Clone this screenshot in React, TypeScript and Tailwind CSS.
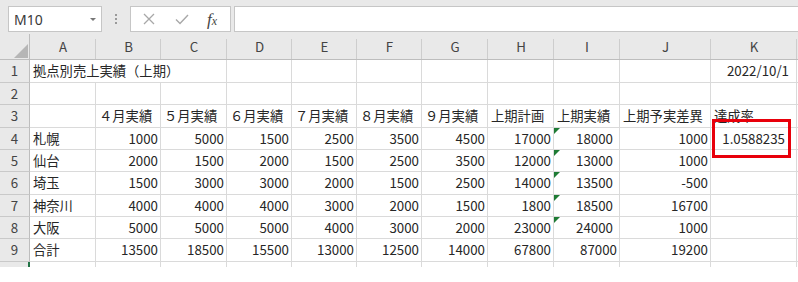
import React from 'react';

const COLS = ['A', 'B', 'C', 'D', 'E', 'F', 'G', 'H', 'I', 'J', 'K'];

// heights of rows 1..9 (px, gridline included)
const ROW_H = ['h-[23px]', 'h-[22px]', 'h-[23px]', 'h-[22px]', 'h-[22px]', 'h-[23px]', 'h-[22px]', 'h-[22px]', 'h-[23px]'];

type Row = (string | number | null)[];

const DATA: Row[] = [
  [null, null, null, null, null, null, null, null, null, null, '2022/10/1'],
  [null, null, null, null, null, null, null, null, null, null, null],
  [null, '４月実績', '５月実績', '６月実績', '７月実績', '８月実績', '９月実績', '上期計画', '上期実績', '上期予実差異', '達成率'],
  ['札幌', 1000, 5000, 1500, 2500, 3500, 4500, 17000, 18000, 1000, '1.0588235'],
  ['仙台', 2000, 1500, 2000, 1500, 2500, 3500, 12000, 13000, 1000, null],
  ['埼玉', 1500, 3000, 3000, 2000, 1500, 2500, 14000, 13500, -500, null],
  ['神奈川', 4000, 4000, 4000, 3000, 2000, 1500, 1800, 18500, 16700, null],
  ['大阪', 5000, 5000, 5000, 4000, 3000, 2000, 23000, 24000, 1000, null],
  ['合計', 13500, 18500, 15500, 13000, 12500, 14000, 67800, 87000, 19200, null],
];

const Cell: React.FC<{ value: string | number | null; col: number; row: number; h: string }> = ({ value, col, row, h }) => {
  const isNum = typeof value === 'number' || (row === 1 && col === 10) || (row === 4 && col === 10);
  const flagged = col === 8 && row >= 4 && row <= 8;
  let pr = 'pr-[2px]';
  if (col === 10) pr = row === 4 ? 'pr-[11px]' : 'pr-[7px]';
  else if (flagged) pr = 'pr-[6px]';
  return (
    <div
      className={`relative ${h} border-r border-b border-[#dadada] flex items-center overflow-visible whitespace-nowrap ${
        isNum ? `justify-end ${pr}` : 'pl-[3px]'
      }`}
    >
      {flagged && (
        <span className="absolute left-0 top-0 w-0 h-0 border-t-[6px] border-r-[6px] border-t-[#1e7b34] border-r-transparent" />
      )}
      {value !== null && <span>{value}</span>}
    </div>
  );
};

export default function App() {
  return (
    <div className="w-[798px] h-[282px] bg-white overflow-hidden text-[#262626] font-['Noto_Sans_CJK_JP','Noto_Sans',sans-serif]">
      {/* formula bar */}
      <div className="h-[37px] bg-[#e9e9e9] flex items-start pt-[6px] border-t-[3px] border-t-[#e2e2e2] -mt-[3px]">
        <div className="ml-[8px] w-[94px] h-[26px] bg-white border border-[#c6c6c6] flex items-center justify-between pl-[5px] pr-[5px]">
          <span className="text-[14px] text-[#3a3a3a] font-['Noto_Sans',sans-serif]">M10</span>
          <span className="w-0 h-0 border-l-[3px] border-r-[3px] border-t-[3px] border-l-transparent border-r-transparent border-t-[#777]" />
        </div>
        <div className="w-[28px] h-[26px] flex flex-col items-center justify-center gap-[2px]">
          <span className="w-[2px] h-[2px] bg-[#9a9a9a]" />
          <span className="w-[2px] h-[2px] bg-[#9a9a9a]" />
          <span className="w-[2px] h-[2px] bg-[#9a9a9a]" />
        </div>
        <div className="w-[101px] h-[26px] bg-white border border-[#c6c6c6] flex items-center">
          <svg width="14" height="14" viewBox="0 0 14 14" className="ml-[11px]">
            <path d="M2 2 L12 12 M12 2 L2 12" stroke="#a8a8a8" strokeWidth="1.3" fill="none" />
          </svg>
          <svg width="16" height="14" viewBox="0 0 16 14" className="ml-[18px]">
            <path d="M2 7.5 L6 11.5 L14 3" stroke="#a8a8a8" strokeWidth="1.4" fill="none" />
          </svg>
          <span className="ml-[17px] text-[17px] italic text-[#444] font-['Liberation_Serif',serif] leading-none">
            f<span className="text-[12px]">x</span>
          </span>
        </div>
        <div className="ml-[3px] flex-1 h-[26px] bg-white border border-[#c6c6c6] border-r-0" />
      </div>

      {/* sheet */}
      <div className="relative text-[13.3px] leading-none">
        <div className="grid grid-cols-[30px_66px_65px_66px_65px_65px_65px_66px_66px_66px_91px_86px_1fr]">
          {/* column header */}
          <div className="relative h-[26px] bg-[#e9e9e9] border-r border-b border-[#bdbdbd]">
            <svg width="14" height="14" viewBox="0 0 14 14" className="absolute right-[1px] bottom-[1px]">
              <path d="M14 0 L14 14 L0 14 Z" fill="#b6b6b6" />
            </svg>
          </div>
          {COLS.map((c) => (
            <div
              key={c}
              className="h-[26px] bg-[#e9e9e9] border-b border-[#bdbdbd] flex items-end justify-center pb-[6px] text-[#444] relative"
            >
              <span className="absolute right-0 bottom-0 w-px h-[20px] bg-[#cdcdcd]" />
              {c}
            </div>
          ))}
          <div className="h-[26px] bg-[#e9e9e9] border-b border-[#bdbdbd]" />

          {DATA.map((row, ri) => {
            const r = ri + 1;
            const h = ROW_H[ri];
            return (
              <React.Fragment key={r}>
                <div className={`${h} bg-[#e9e9e9] border-r border-b border-[#c9c9c9] border-r-[#bdbdbd] flex items-center justify-center text-[#444]`}>
                  {r}
                </div>
                {r === 1 ? (
                  <>
                    <div className={`${h} col-span-3 border-r border-b border-[#dadada] flex items-center pl-[3px] whitespace-nowrap`}>
                      拠点別売上実績（上期）
                    </div>
                    {row.slice(3).map((v, ci) => (
                      <Cell key={ci} value={v} col={ci + 3} row={r} h={h} />
                    ))}
                  </>
                ) : (
                  row.map((v, ci) => <Cell key={ci} value={v} col={ci} row={r} h={h} />)
                )}
                <div className={`${h} border-b border-[#dadada]`} />
              </React.Fragment>
            );
          })}

          {/* partial row 10 */}
          <div className="h-[5px] bg-[#e9e9e9] border-r border-[#bdbdbd] relative">
            <span className="absolute right-[-1px] top-0 w-[2px] h-[5px] bg-[#217346]" />
          </div>
          {COLS.map((c) => (
            <div key={c} className="h-[5px] border-r border-[#dadada]" />
          ))}
          <div className="h-[5px]" />
        </div>

        {/* highlight box drawn over K4 */}
        <div className="absolute left-[712px] top-[85px] w-[79px] h-[39px] border-[3px] border-[#e8000b]" />
      </div>
    </div>
  );
}
